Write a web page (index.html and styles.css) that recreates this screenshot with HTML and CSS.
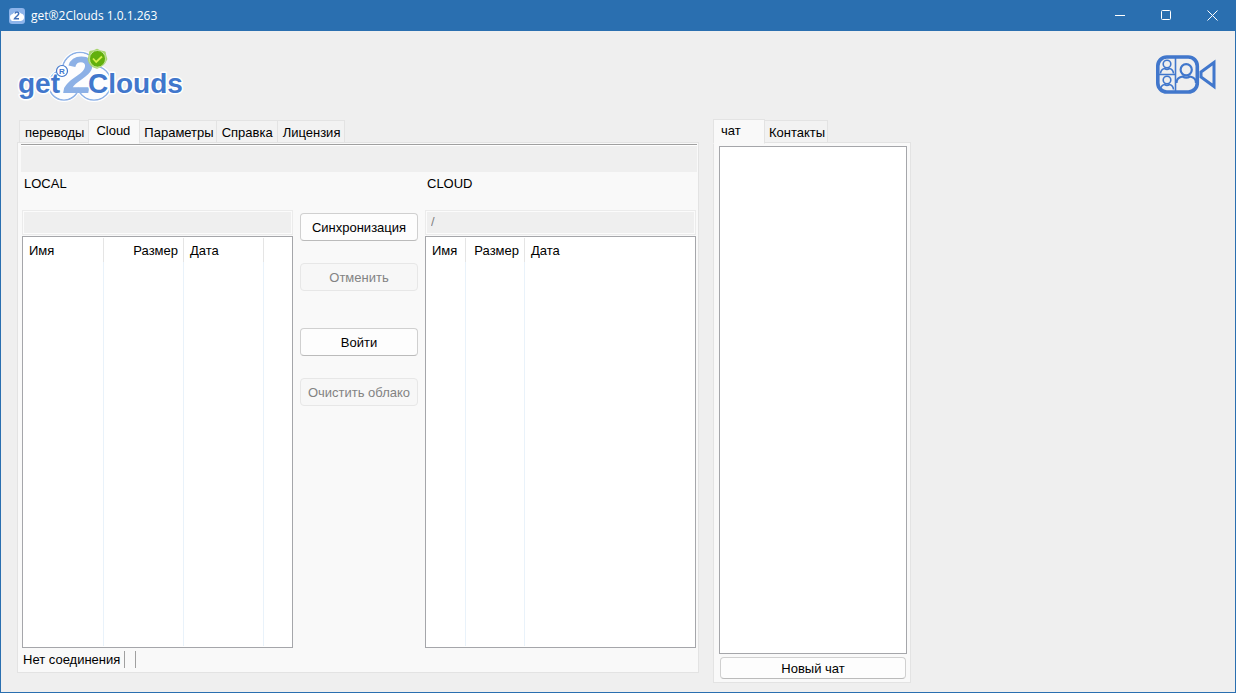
FILE: index.html
```html
<!DOCTYPE html>
<html lang="ru">
<head>
<meta charset="utf-8">
<title>get®2Clouds 1.0.1.263</title>
<link rel="stylesheet" href="styles.css">
</head>
<body>
<div class="window">
  <header class="titlebar">
    <svg class="app-icon" width="16" height="16" viewBox="0 0 16 16" aria-hidden="true">
      <rect width="16" height="16" rx="3" fill="#8db4ea"/>
      <path d="M4.500 13a3.500 3.500 0 0 1-.8-6.900A4.800 4.800 0 0 1 12 5.500a3.800 3.800 0 0 1-.2 7.500z" fill="#fff"/>
      <path d="M6 5.500c.5-2 4-1.800 3.700.3C9.400 7.700 6.500 8.500 5.500 10.800h4.500" fill="none" stroke="#3f6fb8" stroke-width="1.500"/>
    </svg>
    <h1 class="title">get®2Clouds 1.0.1.263</h1>
    <button class="win-btn" type="button" aria-label="Свернуть">
      <svg width="11" height="11" viewBox="0 0 11 11"><path d="M0 5.500h10"/></svg>
    </button>
    <button class="win-btn" type="button" aria-label="Развернуть">
      <svg width="11" height="11" viewBox="0 0 11 11"><rect x=".5" y=".5" width="9" height="9" rx="1"/></svg>
    </button>
    <button class="win-btn" type="button" aria-label="Закрыть">
      <svg width="11" height="11" viewBox="0 0 11 11"><path d="M.5.5l10 10M10.500.5l-10 10"/></svg>
    </button>
  </header>

  <div class="brandbar">
    <svg class="logo" width="168" height="58" viewBox="0 0 168 58" role="img" aria-label="get®2Clouds">
      <g fill="#fff" stroke="#fff" stroke-width="4">
        <circle cx="62" cy="21" r="17.500"/><circle cx="46" cy="36" r="15"/><circle cx="76" cy="34" r="17"/>
      </g>
      <g fill="#fdfdfe" stroke="#8db1e6" stroke-width="1.600">
        <circle cx="62" cy="21" r="17.500"/><circle cx="46" cy="36" r="15"/><circle cx="76" cy="34" r="17"/>
      </g>
      <g fill="#fdfdfe">
        <circle cx="62" cy="21" r="16.700"/><circle cx="46" cy="36" r="14.200"/><circle cx="76" cy="34" r="16.200"/>
      </g>
      <text class="logo-word" x="0" y="44">get</text>
      <text class="logo-two" x="46" y="44">2</text>
      <text class="logo-word" x="70" y="44">Clouds</text>
      <circle cx="44" cy="22" r="5.500" fill="#fff" stroke="#4177cc" stroke-width="1.200"/>
      <text class="logo-reg" x="41" y="25">R</text>
      <path d="M79 1c2.500 2 4.500 2 7.500 2.500C86.500 6 87.500 8 88 10c-1.500 4-4.500 7-9 8.500-4.500-1-7-3.500-8-8 .5-2.500 1-4.500 1.500-7.500 2.500 0 4.500-.5 6.500-2z" fill="none" stroke="#a9d56f" stroke-width="2.600" stroke-linejoin="round"/>
      <ellipse cx="79.500" cy="9.800" rx="8" ry="8.300" fill="#62b00c" stroke="#e8f4d8" stroke-width=".6"/>
      <path d="M75 9.500l3.200 3.500L84 7.500" fill="none" stroke="#d5f04b" stroke-width="1.800"/>
    </svg>
    <button class="video-btn" type="button" aria-label="Видеоконференция">
      <svg width="62" height="42" viewBox="0 0 62 42" fill="none" stroke="#4177cc">
        <rect x="2.800" y="4" width="39.500" height="35" rx="9" stroke-width="3.600"/>
        <path d="M20.500 5v33M4 21.500h16.500" stroke-width="1.600"/>
        <g stroke-width="1.600">
          <circle cx="12" cy="11" r="3.800"/>
          <path d="M5.500 20.500c.2-3.500 2-4.500 4-5 1.500 1 3.500 1 5 0 2 .5 3.800 1.500 4 5"/>
          <circle cx="12" cy="27" r="3.800"/>
          <path d="M5.500 36.500c.2-3.500 2-4.500 4-5 1.500 1 3.500 1 5 0 2 .5 3.800 1.500 4 5"/>
        </g>
        <g stroke-width="2.200">
          <circle cx="31.200" cy="16.800" r="5.600"/>
          <path d="M21.500 30c0-4 3-6 6-6.500 2.500 1.500 5 1.500 7.500 0 3 .5 6 2.500 6 6.500"/>
        </g>
        <path d="M46 19L59 9.500v24L46 24z" stroke-width="3"/>
      </svg>
    </button>
  </div>

  <main class="workspace">
    <section class="pane">
      <div class="tabs files-tabs" role="tablist">
        <button class="tab" role="tab" type="button">переводы</button>
        <button class="tab active" role="tab" type="button" aria-selected="true">Cloud</button>
        <button class="tab" role="tab" type="button">Параметры</button>
        <button class="tab" role="tab" type="button">Справка</button>
        <button class="tab" role="tab" type="button">Лицензия</button>
      </div>
      <div class="sheet cloud-sheet">
        <div class="toolbar"></div>
        <div class="transfer">
          <section class="side">
            <label class="side-name" for="local-path">LOCAL</label>
            <input class="path" id="local-path" type="text" disabled>
            <div class="list">
              <table>
                <colgroup><col class="c-name"><col class="c-size"><col class="c-size"><col></colgroup>
                <thead><tr><th>Имя</th><th class="num">Размер</th><th>Дата</th><th></th></tr></thead>
                <tbody><tr><td></td><td></td><td></td><td></td></tr></tbody>
              </table>
            </div>
          </section>
          <div class="actions">
            <button class="btn" type="button">Синхронизация</button>
            <button class="btn" type="button" disabled>Отменить</button>
            <button class="btn group-start" type="button">Войти</button>
            <button class="btn" type="button" disabled>Очистить облако</button>
          </div>
          <section class="side">
            <label class="side-name" for="cloud-path">CLOUD</label>
            <input class="path" id="cloud-path" type="text" value="/" disabled>
            <div class="list">
              <table>
                <colgroup><col class="c-name-narrow"><col class="c-size-narrow"><col></colgroup>
                <thead><tr><th>Имя</th><th class="num">Размер</th><th>Дата</th></tr></thead>
                <tbody><tr><td></td><td></td><td></td></tr></tbody>
              </table>
            </div>
          </section>
        </div>
        <footer class="status"><span class="cell">Нет соединения</span><span class="cell"></span></footer>
      </div>
    </section>

    <section class="pane">
      <div class="tabs" role="tablist">
        <button class="tab active chat-tab" role="tab" type="button" aria-selected="true">чат</button>
        <button class="tab" role="tab" type="button">Контакты</button>
      </div>
      <div class="sheet chat-sheet">
        <div class="list chat-list"></div>
        <button class="btn new-chat" type="button">Новый чат</button>
      </div>
    </section>
  </main>
</div>
</body>
</html>
```
FILE: styles.css
```css
* {
  box-sizing: border-box;
}

body {
  margin: 0;
  font: 13px/16px "Liberation Sans", Arial, sans-serif;
  color: #000;
}

button,
input {
  font: inherit;
  color: inherit;
}

.window {
  display: flex;
  flex-direction: column;
  min-height: 100vh;
  border: 1px solid #2a6fb0;
  background: #efefef;
}

.titlebar {
  display: flex;
  align-items: center;
  height: 30px;
  padding-left: 8px;
  background: #2a6fb0;
  color: #fff;
}

.app-icon {
  margin-bottom: 1px;
}

.title {
  flex: 1;
  margin: 0 0 0 6px;
  font: 12px/16px "Open Sans", "Noto Sans", sans-serif;
}

.win-btn {
  display: flex;
  align-items: center;
  justify-content: center;
  width: 46px;
  height: 30px;
  padding: 0 0 1px;
  border: 0;
  background: none;
}

.win-btn svg {
  fill: none;
  stroke: #fff;
}

.brandbar {
  display: flex;
  justify-content: space-between;
  align-items: flex-start;
  height: 88px;
  padding: 18px 18px 0 17px;
}

.logo {
  overflow: visible;
}

.logo-word,
.logo-two,
.logo-reg {
  font-family: "Liberation Sans", Arial, sans-serif;
  font-weight: bold;
  fill: #4177cc;
}

.logo-word {
  font-size: 28px;
  stroke: #fff;
  stroke-width: 3px;
  stroke-linejoin: round;
  paint-order: stroke;
}

.logo-two {
  font-size: 52px;
  font-style: italic;
  fill: #8db1e6;
}

.logo-reg {
  font-size: 8px;
}

.video-btn {
  margin-top: 4px;
  padding: 0;
  border: 0;
  background: none;
}

.video-btn svg {
  display: block;
}

.workspace {
  flex: 1;
  display: grid;
  grid-template-columns: minmax(0, 1fr) 198px;
  column-gap: 14px;
  padding: 0 324px 9px 16px;
}

.pane {
  display: flex;
  flex-direction: column;
}

.pane:first-child {
  padding-bottom: 10px;
}

.tabs {
  display: flex;
  align-items: flex-end;
  height: 24px;
  margin-bottom: -1px;
}

.files-tabs {
  padding-left: 2px;
}

.tab {
  height: 23px;
  margin-left: -1px;
  padding: 2px 4px 0 5px;
  border: 1px solid #e3e3e3;
  background: #f2f2f2;
  white-space: nowrap;
}

.tab:first-child {
  margin-left: 0;
}

.tab.active {
  z-index: 1;
  height: 25px;
  padding: 0 9px 2px 7px;
  border-bottom-color: #f9f9f9;
  background: #f9f9f9;
  align-self: flex-start;
}

.tab.active + .tab {
  padding: 2px 2px 0 4px;
}

.tab.chat-tab {
  width: 52px;
  text-align: left;
}

.sheet {
  flex: 1;
  display: flex;
  flex-direction: column;
  border: 1px solid #e3e3e3;
  background: #f9f9f9;
}

.cloud-sheet {
  padding: 1px 1px 4px 3px;
}

.toolbar {
  height: 28px;
  border-top: 1px solid #a0a0a0;
  background: #efefef;
  box-shadow: inset 0 1px #fff;
}

.transfer {
  flex: 1;
  display: grid;
  grid-template-columns: minmax(0, 1fr) 118px minmax(0, 1fr);
  column-gap: 7px;
  padding: 4px 1px 0;
}

.side {
  display: flex;
  flex-direction: column;
}

.side-name {
  height: 34px;
  padding-left: 2px;
}

.path {
  width: 100%;
  height: 25px;
  margin-bottom: 1px;
  padding: 0 5px 2px;
  border: 1px solid #ebebeb;
  background: #efefef;
  box-shadow: inset 0 0 0 1px #fbfbfb;
  color: #838383;
}

.list {
  flex: 1;
  display: grid;
  padding: 1px 0;
  border: 1px solid #a5a6aa;
  background: #fff;
}

table {
  width: 100%;
  height: 100%;
  table-layout: fixed;
  border-collapse: separate;
  border-spacing: 0;
}

.c-name {
  width: 81px;
}

.c-size {
  width: 80px;
}

.c-name-narrow {
  width: 40px;
}

.c-size-narrow {
  width: 59px;
}

th {
  height: 24px;
  padding: 2px 5px 0 6px;
  border-right: 1px solid #e5e5e5;
  font-weight: normal;
  text-align: left;
}

th.num {
  text-align: right;
}

td {
  padding: 0;
  border-right: 1px solid #e9f2fa;
}

th:last-child,
td:last-child {
  border-right: 0;
}

.actions {
  display: flex;
  flex-direction: column;
  gap: 22px;
  padding-top: 37px;
}

.btn {
  height: 28px;
  padding: 2px 0 0;
  border: 1px solid #d0d0d0;
  border-bottom-color: #bbb;
  border-radius: 4px;
  background: #fdfdfd;
}

.btn:disabled {
  border-color: #e7e7e7;
  background: #f7f7f7;
  color: #838383;
}

.group-start {
  margin-top: 15px;
}

.status {
  display: flex;
  height: 20px;
  padding: 3px 0 0 2px;
}

.cell {
  min-width: 11px;
  height: 17px;
  padding: 1px 4px 0 0;
  border-right: 1px solid #a0a0a0;
}

.chat-sheet {
  padding: 3px 3px 3px 5px;
}

.new-chat {
  height: 22px;
  margin: 3px 1px 0;
}
```
